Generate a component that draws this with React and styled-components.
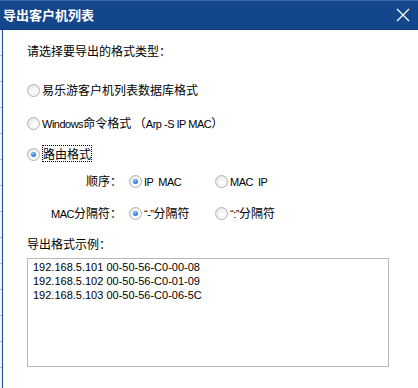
import React from 'react'
import styled, { createGlobalStyle } from 'styled-components'

const GlobalStyle = createGlobalStyle`
  html, body {
    margin: 0;
    padding: 0;
    background: #ffffff;
  }
  body {
    font-family: "Noto Sans CJK SC", "Liberation Sans", sans-serif;
    font-size: 12px;
    color: #000;
  }
`;

const Page = styled.div`
  width: 418px;
  height: 388px;
  display: flex;
  flex-direction: column;
  overflow: hidden;
  background: #fff;
`;

const TitleBar = styled.div`
  height: 28px;
  flex: none;
  display: flex;
  align-items: center;
  justify-content: space-between;
  background: #14468c;
  border-top: 1px solid #3a66ab;
  border-bottom: 1px solid #0f3c7c;
  padding: 0 8px 0 3px;
`;

const Title = styled.div`
  color: #fff;
  font-weight: bold;
  font-size: 13px;
  line-height: 16px;
  margin-top: -1px;
`;

const Close = styled.div`
  width: 14px;
  height: 14px;
  display: flex;
  margin-top: -1px;
`;

const Frame = styled.div`
  flex: 1;
  display: flex;
`;

const Behind = styled.div`
  width: 2px;
  flex: none;
  background: repeating-linear-gradient(
    to bottom,
    #f2f2f2 0px,
    #f2f2f2 25px,
    #b5b5b5 25px,
    #b5b5b5 26px
  );
`;

const Body = styled.div`
  flex: 1;
  border-left: 1px solid #1a4b96;
  padding: 13px 0 0 24px;
  display: flex;
  flex-direction: column;
`;

const Line = styled.div`
  height: 16px;
  line-height: 16px;
  display: flex;
  align-items: center;
  margin-top: ${({ $top }) => $top || 0}px;
  white-space: nowrap;
`;

const En = styled.span`
  font-family: "Liberation Sans", sans-serif;
  font-size: 11px;
  letter-spacing: -0.5px;
  white-space: pre;
`;

const Option = styled.div`
  display: flex;
  align-items: center;
  gap: 2px;
  width: ${({ $w }) => ($w ? `${$w}px` : 'auto')};
`;

const Circle = styled.span`
  width: 13px;
  height: 13px;
  box-sizing: border-box;
  border-radius: 50%;
  border: 1px solid #b3b3b3;
  background: radial-gradient(circle at 60% 65%, #ffffff 0%, #f4f4f4 45%, #dcdcdc 100%);
  display: flex;
  align-items: center;
  justify-content: center;
  flex: none;

  &::after {
    content: '';
    width: 5px;
    height: 5px;
    border-radius: 50%;
    background: radial-gradient(circle at 40% 35%, #8ec0ff 0%, #3a7de6 55%, #1f5fcf 100%);
    display: ${({ $on }) => ($on ? 'block' : 'none')};
  }
`;

const Focus = styled.span`
  outline: 1px dotted #000;
  outline-offset: -1px;
  padding: 0 1px;
  line-height: 16px;
`;

const SubLabel = styled.div`
  width: 95px;
  text-align: right;
  margin-right: 7px;
`;

const Sample = styled.div`
  margin-top: 6px;
  width: 362px;
  height: 109px;
  box-sizing: border-box;
  border: 1px solid #b8b8b8;
  padding: 1px 5px;
  font-family: "Liberation Sans", sans-serif;
  font-size: 11px;
  line-height: 14px;
  color: #000;
`;

const Radio = ({ on, children, w }) => (
  <Option $w={w}>
    <Circle $on={on} />
    <span>{children}</span>
  </Option>
);

const samples = [
  '192.168.5.101 00-50-56-C0-00-08',
  '192.168.5.102 00-50-56-C0-01-09',
  '192.168.5.103 00-50-56-C0-06-5C',
];

export default function App() {
  return (
    <Page>
      <GlobalStyle />
      <TitleBar>
        <Title>导出客户机列表</Title>
        <Close>
          <svg width="14" height="14" viewBox="0 0 14 14">
            <path d="M1 1 L13 13 M13 1 L1 13" stroke="#fff" strokeWidth="1.3" fill="none" />
          </svg>
        </Close>
      </TitleBar>
      <Frame>
        <Behind />
        <Body>
          <Line>请选择要导出的格式类型：</Line>
          <Line $top={23}>
            <Radio>易乐游客户机列表数据库格式</Radio>
          </Line>
          <Line $top={17}>
            <Radio>
              <En>Windows</En>命令格式 （<En>Arp -S IP MAC</En>）
            </Radio>
          </Line>
          <Line $top={15}>
            <Radio on>
              <Focus>路由格式</Focus>
            </Radio>
          </Line>
          <Line $top={11}>
            <SubLabel>顺序：</SubLabel>
            <Radio on w={86}>
              <En>IP  MAC</En>
            </Radio>
            <Radio>
              <En>MAC  IP</En>
            </Radio>
          </Line>
          <Line $top={16}>
            <SubLabel>
              <En>MAC</En>分隔符：
            </SubLabel>
            <Radio on w={86}>
              <En>“-”</En>分隔符
            </Radio>
            <Radio>
              <En>“:”</En>分隔符
            </Radio>
          </Line>
          <Line $top={15}>导出格式示例：</Line>
          <Sample>
            {samples.map((s) => (
              <div key={s}>{s}</div>
            ))}
          </Sample>
        </Body>
      </Frame>
    </Page>
  );
}
